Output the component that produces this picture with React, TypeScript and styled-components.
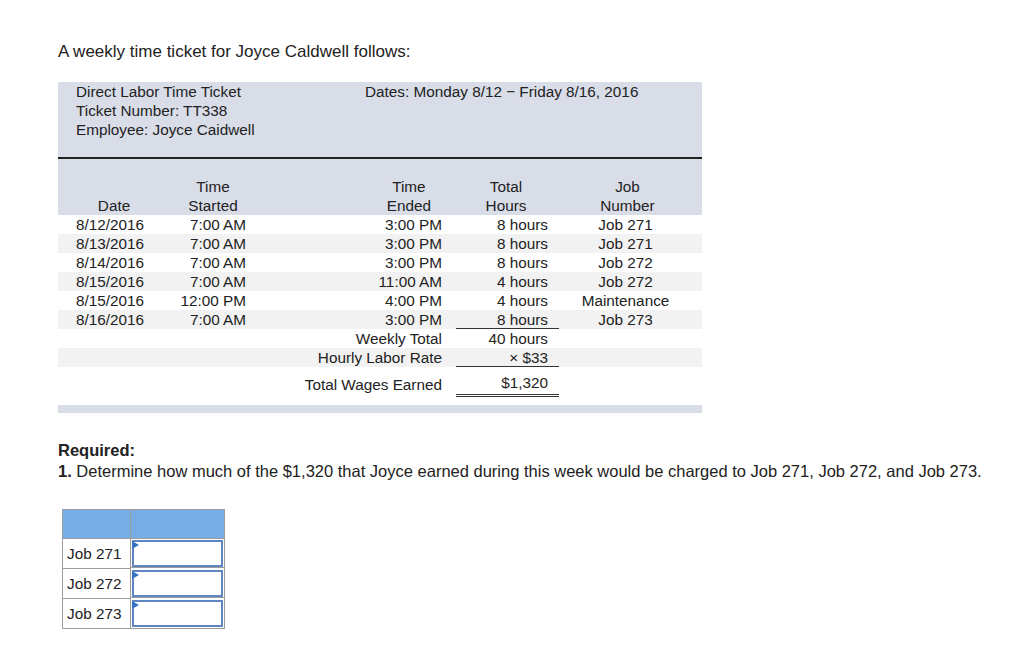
import styled, { createGlobalStyle } from 'styled-components'

const GlobalStyle = createGlobalStyle`
  body {
    margin: 0;
    background: #fff;
    color: #222;
    font-family: "Liberation Sans", Arial, Helvetica, sans-serif;
  }
`

const Page = styled.div`
  padding: 42px 0 40px 58px;
`
const Intro = styled.p`
  font-size: 17px;
  line-height: 20px;
  margin: 0 0 20px;
`
const Ticket = styled.div`
  font-size: 15.3px;
  line-height: 19px;
  width: 644px;
`
const HeaderBand = styled.div`
  background: #d9dde8;
`
const InfoGrid = styled.div`
  border-bottom: 2px solid #222;
  display: grid;
  grid-template-columns: 289px 1fr;
  grid-template-rows: 19px 19px 19px 18px;
  padding-left: 18px;
`
const ColumnHeads = styled.div`
  display: grid;
  grid-template-columns: 112px 86px 197px 106px 143px;
  padding-top: 18px;
`
const Head = styled.div<{ $align?: string; $padR?: number }>`
  align-self: end;
  padding-right: ${p => p.$padR || 0}px;
  text-align: ${p => p.$align || 'center'};
`
const HeadStack = styled.span`
  display: inline-block;
  text-align: center;
`
const Row = styled.div<{ $shade?: boolean }>`
  background: ${p => (p.$shade ? '#f2f2f2' : '#fff')};
  display: grid;
  grid-template-columns: 112px 86px 197px 106px 143px;
  height: 19px;
`
const TotalRow = styled(Row)`
  height: auto;
  margin-bottom: 8px;
  padding-top: 6px;
`
const Cell = styled.div<{ $align?: string; $padL?: number; $padR?: number; $col?: number }>`
  grid-column: ${p => p.$col || 'auto'};
  padding-left: ${p => p.$padL || 0}px;
  padding-right: ${p => p.$padR || 0}px;
  text-align: ${p => p.$align || 'left'};
  white-space: nowrap;
`
const LabelCell = styled(Cell)`
  padding-top: 2px;
`
const HoursCell = styled(Cell)<{ $rule?: 'single' | 'double' }>`
  margin-left: 3px;
  padding-right: 11px;
  padding-bottom: ${p => (p.$rule === 'double' ? 2 : 0)}px;
  text-align: right;
  box-shadow: ${p => (p.$rule === 'single' ? 'inset 0 -1px 0 #333' : 'none')};
  border-bottom: ${p => (p.$rule === 'double' ? '3px double #333' : 'none')};
`
const FooterBand = styled.div`
  background: #d9dde8;
  height: 8px;
`
const Required = styled.div`
  font-size: 16.5px;
  line-height: 21px;
  margin-top: 27px;
`
const Bold = styled.b`
  font-weight: bold;
`
const AnswerGrid = styled.div`
  border: 1px solid #9d9d9d;
  display: grid;
  font-size: 15.3px;
  grid-template-columns: 68px 93px;
  margin: 27px 0 0 4px;
  width: 161px;
`
const AnswerHead = styled.div<{ $last?: boolean }>`
  background: #78ace4;
  border-bottom: 1px solid #9d9d9d;
  border-right: ${p => (p.$last ? 'none' : '1px solid #9d9d9d')};
  height: 28px;
`
const JobLabel = styled.div<{ $last?: boolean }>`
  align-items: center;
  border-bottom: ${p => (p.$last ? 'none' : '1px solid #9d9d9d')};
  border-right: 1px solid #9d9d9d;
  display: flex;
  height: 29px;
  padding-left: 4px;
`
const InputCell = styled.div<{ $last?: boolean }>`
  border-bottom: ${p => (p.$last ? 'none' : '1px solid #9d9d9d')};
  box-sizing: border-box;
  height: 29px;
  padding: 1px 0 0 1px;
`
const InputBox = styled.div`
  background: #fff;
  border: 2px solid #5f86c2;
  box-sizing: border-box;
  height: 27px;
  position: relative;
  width: 91px;

  &::before {
    border-bottom: 4px solid transparent;
    border-left: 7px solid #3572c8;
    border-top: 4px solid transparent;
    content: '';
    left: -2px;
    position: absolute;
    top: -1px;
  }
`

type Entry = { date: string; start: string; end: string; hours: string; job: string }

const entries: Entry[] = [
  { date: '8/12/2016', start: '7:00 AM', end: '3:00 PM', hours: '8 hours', job: 'Job 271' },
  { date: '8/13/2016', start: '7:00 AM', end: '3:00 PM', hours: '8 hours', job: 'Job 271' },
  { date: '8/14/2016', start: '7:00 AM', end: '3:00 PM', hours: '8 hours', job: 'Job 272' },
  { date: '8/15/2016', start: '7:00 AM', end: '11:00 AM', hours: '4 hours', job: 'Job 272' },
  { date: '8/15/2016', start: '12:00 PM', end: '4:00 PM', hours: '4 hours', job: 'Maintenance' },
  { date: '8/16/2016', start: '7:00 AM', end: '3:00 PM', hours: '8 hours', job: 'Job 273' },
]

const jobs = ['Job 271', 'Job 272', 'Job 273']

export default function App() {
  return (
    <Page>
      <GlobalStyle />
      <Intro>A weekly time ticket for Joyce Caldwell follows:</Intro>
      <Ticket>
        <HeaderBand>
          <InfoGrid>
            <div>Direct Labor Time Ticket</div>
            <div>Dates: Monday 8/12 − Friday 8/16, 2016</div>
            <div>Ticket Number: TT338</div>
            <div />
            <div>Employee: Joyce Caidwell</div>
          </InfoGrid>
          <ColumnHeads>
            <Head>Date</Head>
            <Head>Time<br />Started</Head>
            <Head $align="right" $padR={22}><HeadStack>Time<br />Ended</HeadStack></Head>
            <Head>Total<br />Hours</Head>
            <Head $padR={6}>Job<br />Number</Head>
          </ColumnHeads>
        </HeaderBand>
        {entries.map((e, i) => (
          <Row key={i} $shade={i % 2 === 1}>
            <Cell $padL={18}>{e.date}</Cell>
            <Cell $align="right" $padR={10}>{e.start}</Cell>
            <Cell $align="right" $padR={11}>{e.end}</Cell>
            <HoursCell $rule={i === entries.length - 1 ? 'single' : undefined}>{e.hours}</HoursCell>
            <Cell $align="center" $padR={10}>{e.job}</Cell>
          </Row>
        ))}
        <Row>
          <Cell $col={3} $align="right" $padR={11}>Weekly Total</Cell>
          <HoursCell>40 hours</HoursCell>
        </Row>
        <Row $shade>
          <Cell $col={3} $align="right" $padR={11}>Hourly Labor Rate</Cell>
          <HoursCell $rule="single">× $33</HoursCell>
        </Row>
        <TotalRow>
          <LabelCell $col={3} $align="right" $padR={11}>Total Wages Earned</LabelCell>
          <HoursCell $rule="double">$1,320</HoursCell>
        </TotalRow>
        <FooterBand />
      </Ticket>
      <Required>
        <Bold>Required:</Bold>
        <br />
        <Bold>1.</Bold> Determine how much of the $1,320 that Joyce earned during this week would be charged to Job 271, Job 272, and Job 273.
      </Required>
      <AnswerGrid>
        <AnswerHead />
        <AnswerHead $last />
        {jobs.map((j, i) => (
          <>
            <JobLabel key={j} $last={i === jobs.length - 1}>{j}</JobLabel>
            <InputCell key={j + '-in'} $last={i === jobs.length - 1}>
              <InputBox />
            </InputCell>
          </>
        ))}
      </AnswerGrid>
    </Page>
  )
}
